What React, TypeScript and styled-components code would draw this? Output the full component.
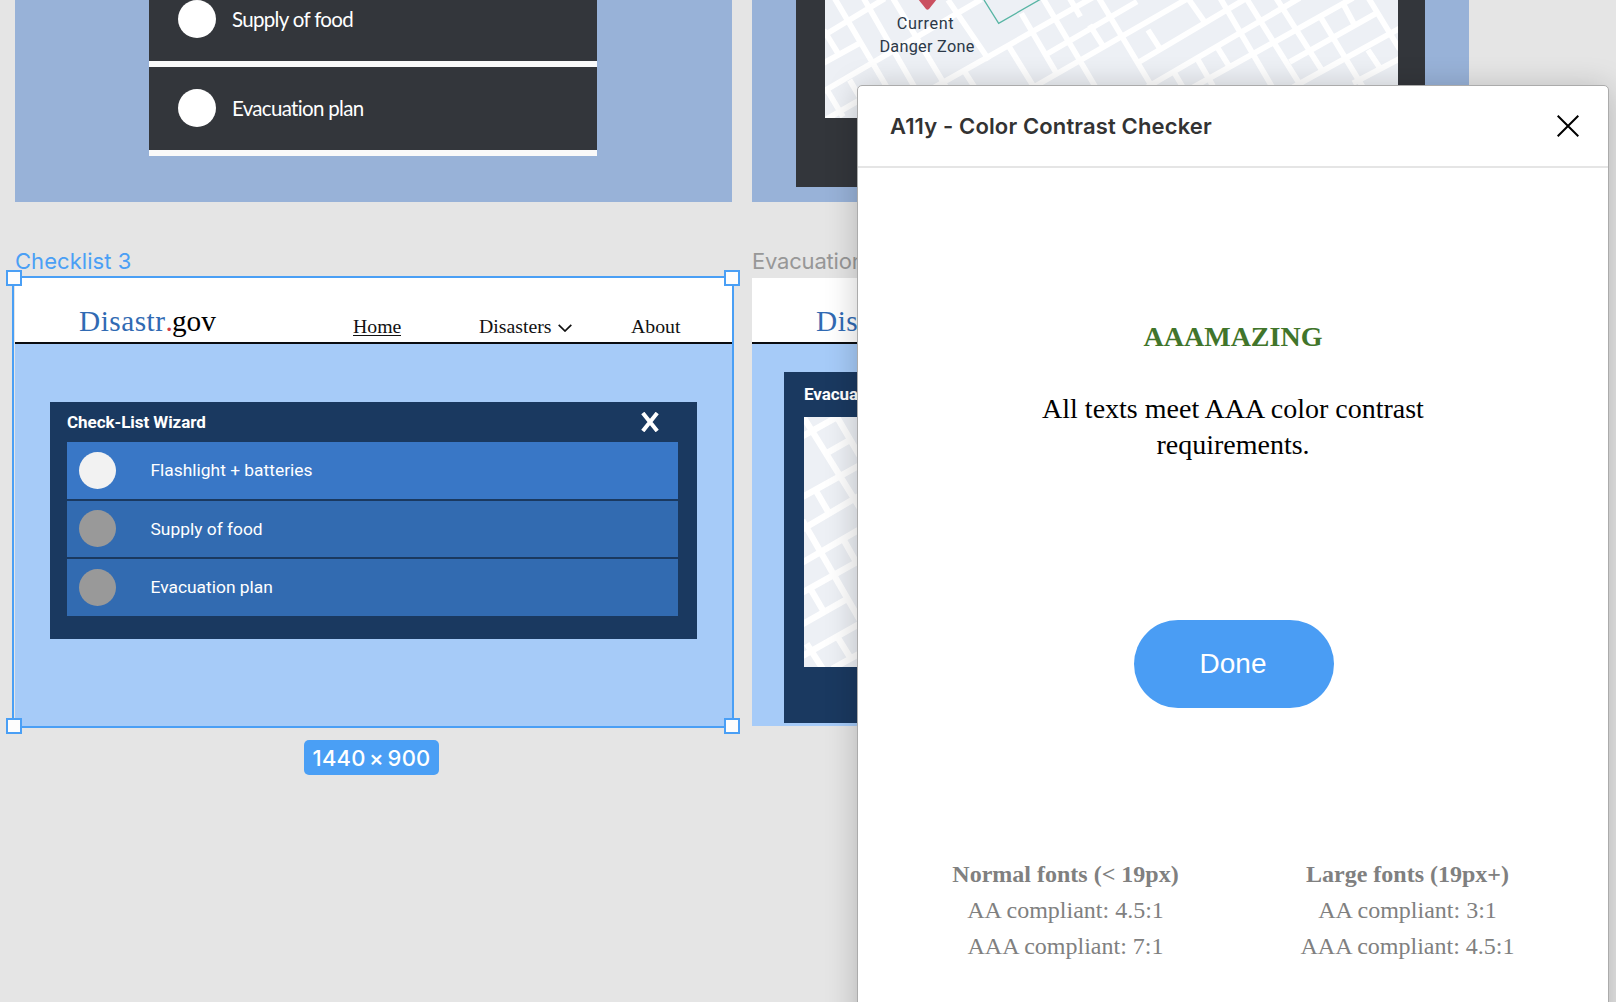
import React from "react";
import styled, { createGlobalStyle } from "styled-components";

const Global = createGlobalStyle`
  html, body { margin: 0; padding: 0; overflow: hidden; }
  *, *::before, *::after { box-sizing: border-box; }
`;

const serif = `"Liberation Serif", "Times New Roman", serif`;
const inter = `Inter, sans-serif`;
const roboto = `Roboto, sans-serif`;

const Canvas = styled.main`
  position: relative;
  width: 1616px;
  height: 1002px;
  overflow: hidden;
  background: #e5e5e5;
`;

/* Frames sit freely on the canvas */
const Frame = styled.section<{ $x: number; $y: number; $w: number; $h: number; $bg: string }>`
  position: absolute;
  left: ${(p) => p.$x}px;
  top: ${(p) => p.$y}px;
  width: ${(p) => p.$w}px;
  height: ${(p) => p.$h}px;
  background: ${(p) => p.$bg};
`;

const FrameLabel = styled.div<{ $x: number; $active?: boolean }>`
  position: absolute;
  left: ${(p) => p.$x}px;
  top: 247px;
  font: 400 22px/28px ${inter};
  letter-spacing: ${(p) => (p.$active ? "0.05px" : "-0.2px")};
  color: ${(p) => (p.$active ? "#4a9ff5" : "#979797")};
  white-space: nowrap;
`;

/* Dark checklist */
const DarkList = styled.ul`
  width: 448px;
  margin: 0 0 0 134px;
  padding: 0;
  list-style: none;
`;

const DarkRow = styled.li<{ $h: number; $pad: number }>`
  display: flex;
  align-items: flex-start;
  gap: 16px;
  height: ${(p) => p.$h}px;
  padding: ${(p) => p.$pad}px 0 0 29px;
  border-bottom: 6px solid #f9f9f9;
  background: #33363b;
`;

const Dot = styled.span<{ $size: number; $color: string }>`
  flex: none;
  width: ${(p) => p.$size}px;
  height: ${(p) => p.$size}px;
  border-radius: 50%;
  background: ${(p) => p.$color};
`;

const DarkText = styled.span`
  font: 400 20.5px/38px Lato, sans-serif;
  letter-spacing: -0.68px;
  color: #fff;
  white-space: nowrap;
`;

/* Dark map card */
const DarkMapCard = styled.div`
  display: flex;
  align-items: flex-start;
  width: 629px;
  height: 187px;
  margin-left: 44px;
  padding-left: 29px;
  background: #33363b;
`;

const MapBox = styled.div<{ $w: number; $h: number }>`
  position: relative;
  flex: none;
  width: ${(p) => p.$w}px;
  height: ${(p) => p.$h}px;
  overflow: hidden;
  background: #edf0f5;
  svg { display: block; }
`;

const PinLabel = styled.div`
  position: absolute;
  left: 52px;
  top: 12px;
  width: 100px;
  display: flex;
  flex-direction: column;
  align-items: center;
  font: 400 16.3px/23px ${roboto};
  letter-spacing: 0.25px;
  color: #2c3948;
  white-space: nowrap;
  span:first-child { letter-spacing: 0.6px; padding-right: 3px; }
`;

/* Site header */
const SiteHeader = styled.header`
  display: flex;
  align-items: flex-start;
  height: 66px;
  padding: 26px 0 0 64px;
  border-bottom: 2px solid #0b0d10;
  background: #fff;
  overflow: hidden;
`;

const Logo = styled.div`
  width: 274px;
  flex: none;
  font: 400 29.3px/34px ${serif};
  letter-spacing: -0.1px;
  color: #000;
  b { font-weight: 400; letter-spacing: 0.5px; color: #306ab3; }
  i { font-style: normal; letter-spacing: -0.8px; color: #d23b46; }
`;

const Nav = styled.nav`
  display: flex;
  align-items: flex-start;
  padding-top: 10px;
  font: 400 19.8px/24px ${serif};
  color: #111;
`;

const NavItem = styled.a<{ $w?: number; $active?: boolean }>`
  display: flex;
  align-items: center;
  gap: 6px;
  width: ${(p) => (p.$w ? `${p.$w}px` : "auto")};
  span {
    height: 22px;
    border-bottom: ${(p) => (p.$active ? "1.5px solid #111" : "none")};
  }
  svg { margin-top: 5px; }
`;

/* Checklist wizard */
const WizardCard = styled.div`
  width: 647px;
  height: 237px;
  margin: 58px 0 0 35px;
  padding: 0 19px 0 17px;
  background: #1a3960;
`;

const WizardHead = styled.div`
  display: flex;
  align-items: center;
  justify-content: space-between;
  height: 40px;
  padding: 0 19px 1px 0;
`;

const CardTitle = styled.h2`
  margin: 0;
  font: 700 17px/22px ${roboto};
  letter-spacing: -0.05px;
  color: #fff;
  white-space: nowrap;
`;

const WizardList = styled.ul`
  display: flex;
  flex-direction: column;
  gap: 2px;
  margin: 0;
  padding: 0;
  list-style: none;
`;

const WizardRow = styled.li<{ $active?: boolean }>`
  display: flex;
  align-items: center;
  gap: 35px;
  height: 56.5px;
  padding-left: 11.5px;
  background: ${(p) => (p.$active ? "#3977c6" : "#326bb1")};
  font: 400 17.4px/24px ${roboto};
  color: #fff;
`;

/* Evacuation map card */
const EvacCard = styled.div`
  width: 650px;
  height: 351px;
  margin: 28px 0 0 32px;
  padding: 12px 0 0 20px;
  background: #1a3960;
  h2 { height: 33px; line-height: 21px; }
`;

/* Selection chrome */
const Selection = styled.div`
  position: absolute;
  left: 12px;
  top: 276px;
  width: 722px;
  height: 452px;
  border: 2px solid #4a9ff5;
`;

const Handle = styled.span<{ $right?: boolean; $bottom?: boolean }>`
  position: absolute;
  ${(p) => (p.$right ? "right: -8px" : "left: -8px")};
  ${(p) => (p.$bottom ? "bottom: -8px" : "top: -8px")};
  width: 16px;
  height: 16px;
  border: 2px solid #4a9ff5;
  background: #fdfdfd;
`;

const SizeBadge = styled.div`
  position: absolute;
  left: 304px;
  top: 740px;
  width: 135px;
  height: 35px;
  border-radius: 5px;
  background: #4a9ff5;
  color: #fff;
  text-align: center;
  font: 500 22px/36px ${inter};
  letter-spacing: 0.2px;
  white-space: nowrap;
  word-spacing: -2.5px;
`;

/* Plugin window */
const Plugin = styled.aside`
  position: absolute;
  left: 857px;
  top: 85px;
  width: 752px;
  height: 960px;
  display: flex;
  flex-direction: column;
  border: 1px solid #ababab;
  border-radius: 5px;
  background: #fff;
  box-shadow: 0 4px 32px rgba(0, 0, 0, 0.22);
`;

const PluginHead = styled.header`
  display: flex;
  flex: none;
  align-items: center;
  justify-content: space-between;
  height: 82px;
  padding: 0 29px 0 32px;
  border-bottom: 2px solid #e5e5e5;
`;

const PluginTitle = styled.h1`
  margin: 0;
  padding-bottom: 1px;
  font: 600 22px/28px ${inter};
  letter-spacing: 0.14px;
  color: #333;
`;

const PluginBody = styled.div`
  display: flex;
  flex-direction: column;
  align-items: center;
  padding-top: 151px;
  font: 400 28px/36px ${serif};
  color: #000;
  text-align: center;
`;

const Verdict = styled.strong`
  color: #41752b;
`;

const Message = styled.p`
  width: 420px;
  margin: 36px 0 0;
`;

const DoneButton = styled.button`
  width: 200px;
  height: 88px;
  margin: 157px 0 0 2px;
  padding: 0 2px 0 0;
  border: 0;
  border-radius: 44px;
  background: #4a9df4;
  color: #fff;
  font: 400 28px/36px "Liberation Sans", Arial, sans-serif;
`;

const Levels = styled.div`
  display: grid;
  grid-template-columns: 342px 342px;
  margin: 148px 0 0 7px;
  font-size: 24px;
  color: #808080;
`;

const Level = styled.div`
  display: flex;
  flex-direction: column;
`;

type Seg = [number, number, number, number];

const cityStreets: Seg[] = [
  [70, 108, 255, -4], [70, 190, 185, 127], [70, 275, 545, -2], [80, 358, 180, 300],
  [390, 270, 880, -8], [740, 163, 1012, 5], [690, 268, 1160, -2], [1020, 185, 1345, -8],
  [1035, 266, 1500, -6], [1170, 268, 1660, -6], [1470, 186, 1730, 40], [1480, 262, 1800, 85],
  [1660, 250, 1800, 176],
  [105, -5, 262, 262], [72, 90, 118, 165], [192, -5, 345, 262], [280, -5, 440, 262],
  [85, 275, 130, 350], [150, 240, 185, 300], [495, 215, 525, 262], [445, 0, 568, 180],
  [625, 135, 705, 265], [665, 40, 775, 228], [730, -5, 890, 265], [870, 75, 908, 135],
  [810, -5, 842, 50], [898, -5, 1060, 265], [1045, 90, 1080, 145], [1125, 220, 1150, 262],
  [1165, -5, 1212, 62], [1262, -5, 1420, 265], [1340, -5, 1505, 260], [1430, -5, 1570, 216],
  [1562, 50, 1690, 262], [1630, 10, 1664, 74], [1707, -5, 1800, 148],
  [1252, 140, 1292, 205], [1195, 180, 1240, 258], [1705, 150, 1742, 206],
];

const evacStreets: Seg[] = [
  [-5, 58, 105, -3], [-5, -5, 175, 285], [73, 106, 143, 66], [96, -5, 175, 130],
  [-5, 240, 175, 140], [38, 225, 77, 292], [-5, 337, 175, 231], [-5, 437, 175, 332],
  [-5, 310, 175, 622], [120, 370, 158, 438], [-5, 527, 175, 426], [22, 520, 58, 582],
  [-5, 622, 125, 548], [-5, 717, 175, 616], [8, 680, 58, 758], [103, 664, 145, 732],
  [85, 755, 175, 705],
];

const toPath = (segs: Seg[]) => segs.map(([a, b, c, d]) => `M${a} ${b}L${c} ${d}`).join("");

const CityMap = () => (
  <MapBox $w={573} $h={118}>
    <svg width="573" height="118" viewBox="76 0 1719 354">
      <path d={toPath(cityStreets)} stroke="#fff" strokeWidth="17" fill="none" />
      <path d="M553 0L597 70L722 -2" stroke="#58b5a4" strokeWidth="4" fill="none" />
      <path d="M355 -3H412L388 27Q383 31 379 27Z" fill="#ca5060" />
    </svg>
    <PinLabel>
      <span>Current</span>
      <span>Danger Zone</span>
    </PinLabel>
  </MapBox>
);

const EvacMap = () => (
  <MapBox $w={600} $h={250}>
    <svg width="600" height="250" viewBox="0 0 1800 750">
      <path d={toPath(evacStreets)} stroke="#fff" strokeWidth="19" fill="none" />
    </svg>
  </MapBox>
);

const Header = ({ withNav }: { withNav?: boolean }) => (
  <SiteHeader>
    <Logo>
      <b>Disastr</b>
      <i>.</i>gov
    </Logo>
    {withNav && (
      <Nav>
        <NavItem $w={126} $active>
          <span>Home</span>
        </NavItem>
        <NavItem $w={152}>
          <span>Disasters</span>
          <svg width="14" height="8" viewBox="0 0 14 8" fill="none" stroke="#111" strokeWidth="1.7">
            <path d="M.7 .8L7 7L13.3 .8" />
          </svg>
        </NavItem>
        <NavItem>
          <span>About</span>
        </NavItem>
      </Nav>
    )}
  </SiteHeader>
);

const steps = ["Flashlight + batteries", "Supply of food", "Evacuation plan"];

export default function App() {
  return (
    <Canvas>
      <Global />

      <Frame $x={15} $y={0} $w={717} $h={202} $bg="#98b2d8">
        <DarkList>
          <DarkRow $h={67} $pad={0}>
            <Dot $size={38} $color="#fff" />
            <DarkText>Supply of food</DarkText>
          </DarkRow>
          <DarkRow $h={89} $pad={22}>
            <Dot $size={38} $color="#fff" />
            <DarkText>Evacuation plan</DarkText>
          </DarkRow>
        </DarkList>
      </Frame>

      <Frame $x={752} $y={0} $w={717} $h={202} $bg="#98b2d8">
        <DarkMapCard>
          <CityMap />
        </DarkMapCard>
      </Frame>

      <FrameLabel $x={15} $active>Checklist 3</FrameLabel>
      <FrameLabel $x={752}>Evacuation</FrameLabel>

      <Frame $x={15} $y={278} $w={717} $h={449} $bg="#a6cbf8">
        <Header withNav />
        <WizardCard>
          <WizardHead>
            <CardTitle>Check-List Wizard</CardTitle>
            <svg width="18" height="20" viewBox="0 0 18 20" stroke="#fff" strokeWidth="4">
              <path d="M1.8 1L16.2 19M16.2 1L1.8 19" />
            </svg>
          </WizardHead>
          <WizardList>
            {steps.map((step, i) => (
              <WizardRow key={step} $active={i === 0}>
                <Dot $size={37} $color={i === 0 ? "#f2f2f2" : "#999"} />
                {step}
              </WizardRow>
            ))}
          </WizardList>
        </WizardCard>
      </Frame>

      <Frame $x={752} $y={278} $w={717} $h={448} $bg="#a6cbf8">
        <Header />
        <EvacCard>
          <CardTitle>Evacuation Map</CardTitle>
          <EvacMap />
        </EvacCard>
      </Frame>

      <Selection>
        <Handle />
        <Handle $right />
        <Handle $bottom />
        <Handle $right $bottom />
      </Selection>
      <SizeBadge>1440 × 900</SizeBadge>

      <Plugin>
        <PluginHead>
          <PluginTitle>A11y - Color Contrast Checker</PluginTitle>
          <svg width="22" height="22" viewBox="0 0 22 22" stroke="#000" strokeWidth="2">
            <path d="M.7 .7L21.3 21.3M21.3 .7L.7 21.3" />
          </svg>
        </PluginHead>
        <PluginBody>
          <Verdict>AAAMAZING</Verdict>
          <Message>All texts meet AAA color contrast requirements.</Message>
          <DoneButton>Done</DoneButton>
          <Levels>
            <Level>
              <strong>Normal fonts (&lt; 19px)</strong>
              <span>AA compliant: 4.5:1</span>
              <span>AAA compliant: 7:1</span>
            </Level>
            <Level>
              <strong>Large fonts (19px+)</strong>
              <span>AA compliant: 3:1</span>
              <span>AAA compliant: 4.5:1</span>
            </Level>
          </Levels>
        </PluginBody>
      </Plugin>
    </Canvas>
  );
}
